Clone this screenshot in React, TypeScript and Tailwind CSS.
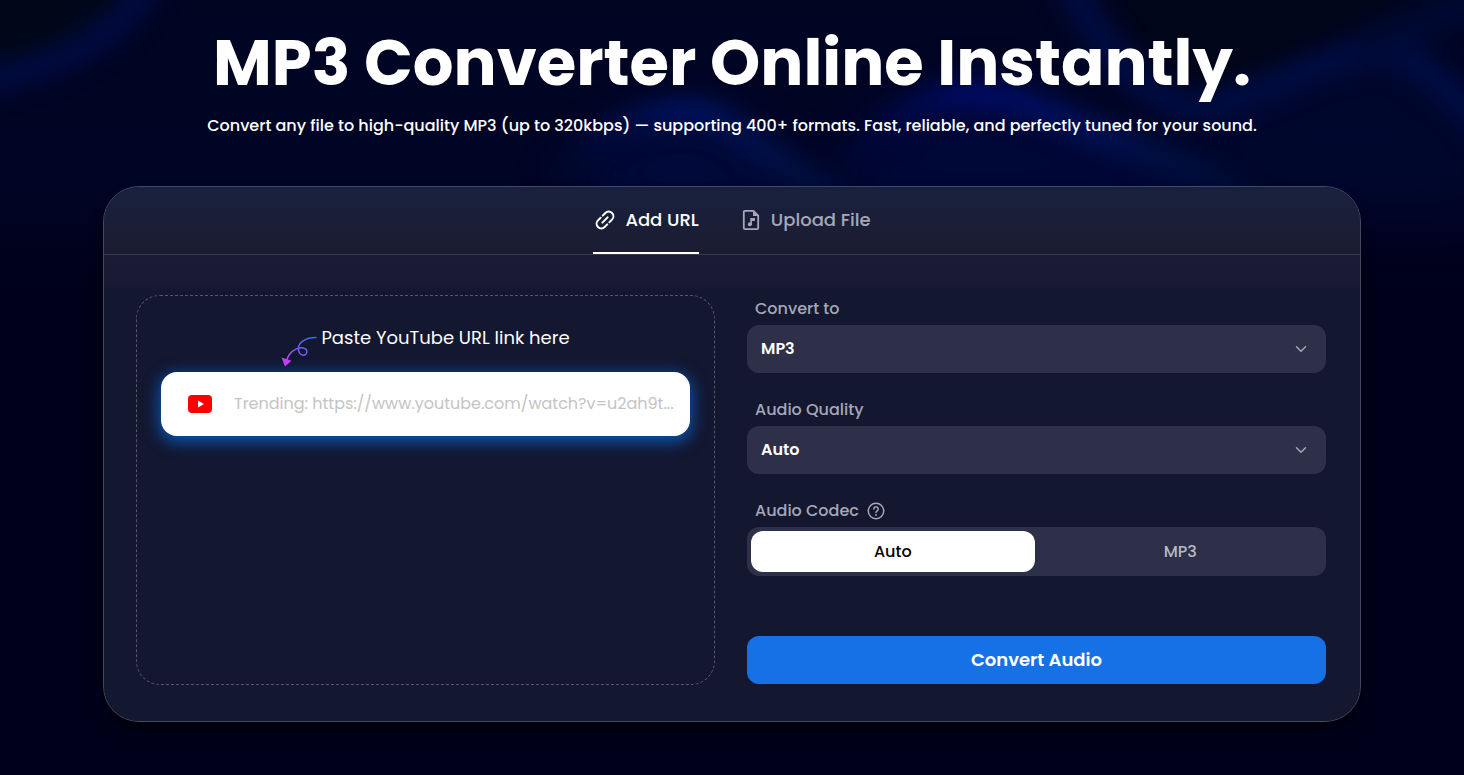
import { useState } from "react";
import { ChevronDown } from "lucide-react";

const TABS = ["url", "file"] as const;
const CODECS = ["Auto", "MP3"];

function LinkIcon() {
  return (
    <svg width="24" height="24" viewBox="0 0 24 24" fill="none" stroke="currentColor" strokeWidth="2" strokeLinecap="round" strokeLinejoin="round" aria-hidden="true">
      <g transform="rotate(-45 12 12)">
        <path d="M10.500 7.300H6.800a4.700 4.700 0 0 0 0 9.400h3.700" />
        <path d="M13.500 16.700h3.700a4.700 4.700 0 0 0 0-9.400h-3.700" />
        <path d="M8.300 12h7.400" />
      </g>
    </svg>
  );
}

function MusicFileIcon() {
  return (
    <svg width="24" height="24" viewBox="0 0 24 24" fill="none" aria-hidden="true">
      <path d="M14.500 2.900H6A1.200 1.200 0 0 0 4.800 4.100v15.800A1.200 1.200 0 0 0 6 21.100h12a1.200 1.200 0 0 0 1.200-1.200V7.600z" stroke="currentColor" strokeWidth="1.800" strokeLinejoin="round" />
      <path d="M14 2.500v5.400h5.500z" fill="currentColor" />
      <path d="M12.100 16.200v-5.500h3v1.600h-2.300" stroke="currentColor" strokeWidth="1.600" />
      <circle cx="10.900" cy="16.200" r="2" fill="currentColor" />
    </svg>
  );
}

function CurlyArrow() {
  return (
    <svg width="36" height="32" viewBox="0 0 36 32" fill="none" aria-hidden="true">
      <defs>
        <linearGradient id="curl" x1="34" y1="2" x2="4" y2="30" gradientUnits="userSpaceOnUse">
          <stop stopColor="#2f6df2" />
          <stop offset="0.55" stopColor="#7c5cf5" />
          <stop offset="1" stopColor="#cf3df5" />
        </linearGradient>
      </defs>
      <path d="M35 1.500C25 1.500 16.500 6.500 17.500 13.500c.8 7 7.800 7.200 8.300 2.500.4-4.500-6-5.500-11-2.800C10 15.700 7 19 5.500 25" stroke="url(#curl)" strokeWidth="1.500" strokeLinecap="round" />
      <path d="M0.500 21.500l10 3.200L4 30.500z" fill="#c63df5" />
    </svg>
  );
}

function YoutubeIcon() {
  return (
    <svg width="24" height="18" viewBox="0 0 24 18" aria-hidden="true">
      <rect width="24" height="18" rx="4" fill="#ff0000" />
      <path d="M10 5.500v7l6-3.500z" fill="#fff" />
    </svg>
  );
}

function HelpIcon() {
  return (
    <svg width="18" height="18" viewBox="0 0 18 18" fill="none" stroke="currentColor" strokeWidth="1.500" strokeLinecap="round" aria-hidden="true">
      <circle cx="9" cy="9" r="7.700" />
      <path d="M6.800 7a2.200 2.200 0 1 1 3.400 1.900C9.400 9.400 9 9.800 9 10.600" />
      <circle cx="9" cy="13" r="0.300" />
    </svg>
  );
}

/* Soft blue ribbons behind the headline */
function Waves() {
  return (
    <svg className="absolute inset-x-0 top-0 w-full h-[290px] pointer-events-none" viewBox="0 0 1464 290" preserveAspectRatio="none" fill="none" aria-hidden="true">
      <defs>
        <filter id="soft" x="-20%" y="-50%" width="140%" height="200%" colorInterpolationFilters="sRGB">
          <feGaussianBlur stdDeviation="12" />
        </filter>
        <filter id="haze" x="-20%" y="-50%" width="140%" height="200%" colorInterpolationFilters="sRGB">
          <feGaussianBlur stdDeviation="26" />
        </filter>
        <linearGradient id="glow" x1="0" y1="0" x2="0" y2="1">
          <stop stopColor="#000522" />
          <stop offset="0.6" stopColor="#000525" />
          <stop offset="1" stopColor="#00001a" />
        </linearGradient>
        <linearGradient id="ribbonLeft" x1="540" y1="0" x2="860" y2="0" gradientUnits="userSpaceOnUse">
          <stop stopColor="#00125a" stopOpacity="0" />
          <stop offset="0.45" stopColor="#00146a" />
          <stop offset="1" stopColor="#001a4a" stopOpacity="0.4" />
        </linearGradient>
        <linearGradient id="ribbonRight" x1="830" y1="0" x2="1270" y2="0" gradientUnits="userSpaceOnUse">
          <stop stopColor="#000c60" stopOpacity="0" />
          <stop offset="0.32" stopColor="#000c74" />
          <stop offset="0.6" stopColor="#00145c" />
          <stop offset="1" stopColor="#00183c" stopOpacity="0.3" />
        </linearGradient>
      </defs>
      <rect width="1464" height="290" fill="url(#glow)" />
      <g filter="url(#haze)">
        <path d="M560 210C630 110 700 110 740 140S820 200 850 210z" fill="#000a3c" />
        <path d="M830 210C900 80 980 80 1060 118S1200 150 1260 210z" fill="#000838" />
        <path d="M1180 210L1220 110L1370 50L1480 120V210z" fill="#00072e" />
      </g>
      <g filter="url(#soft)">
        <path d="M-40-40H145C115 40 60 60-40 75z" fill="#000719" />
        <path d="M1090-40H1480L1350 30Q1220 100 1190 85Q1130 50 1090-40z" fill="#000519" />
        <path d="M160-40C130 40 50 70-40 86" stroke="#000c4c" strokeWidth="22" />
        <path d="M500 220C600 110 690 90 740 132S810 170 860 230" stroke="url(#ribbonLeft)" strokeWidth="24" />
        <path d="M790 220C900 80 970 75 1060 118S1190 150 1280 230" stroke="url(#ribbonRight)" strokeWidth="24" />
        <path d="M1060-40C1100 60 1160 120 1220 104S1330 50 1380 54S1440 90 1510 150" stroke="#000e48" strokeWidth="26" />
        <path d="M1360 50L1500-6" stroke="#000a34" strokeWidth="34" />
      </g>
    </svg>
  );
}

type SelectFieldProps = {
  id: string;
  label: string;
  options: string[];
};

function SelectField({ id, label, options }: SelectFieldProps) {
  return (
    <div>
      <label htmlFor={id} className="block px-2 mb-0.5 text-base leading-7 font-medium text-[#a6a7b8]">
        {label}
      </label>
      <div className="relative">
        <select id={id} className="appearance-none w-full h-12 px-3.5 rounded-xl bg-[#2e2f48] text-base font-semibold text-white outline-none cursor-pointer">
          {options.map((option) => (
            <option key={option}>{option}</option>
          ))}
        </select>
        <ChevronDown size={18} className="absolute right-4 top-1/2 -translate-y-1/2 text-[#a6a7b8] pointer-events-none" />
      </div>
    </div>
  );
}

export default function App() {
  const [tab, setTab] = useState<(typeof TABS)[number]>("url");
  const [codec, setCodec] = useState("Auto");

  const tabClass = (name: string) =>
    `flex items-center gap-2 h-full border-b-2 text-lg font-medium ${
      tab === name ? "border-white text-white" : "border-transparent text-[#a6a7b8]"
    }`;

  return (
    <main className="relative min-h-screen overflow-hidden bg-[#00001a] pt-[27px] pb-12 font-['Poppins',Inter,sans-serif] text-white">
      <Waves />

      <div className="relative px-4 text-center">
        <h1 className="text-[64px] leading-[72px] font-bold">MP3 Converter Online Instantly.</h1>
        <p className="mt-[15px] text-base leading-6 font-medium">
          Convert any file to high-quality MP3 (up to 320kbps) — supporting 400+ formats. Fast, reliable, and perfectly tuned for your sound.
        </p>
      </div>

      <div className="relative mt-12 mx-auto w-full max-w-[1258px] overflow-hidden rounded-[36px] border border-[#454860] bg-[#131730] shadow-lg shadow-black/50">
        {/* Tabs */}
        <div className="flex justify-center gap-10 h-[68px] border-b border-[#363a50] bg-linear-to-b from-[#18213e] to-[#1b1c32]">
          <button type="button" className={tabClass("url")} onClick={() => setTab("url")}>
            <LinkIcon />
            Add URL
          </button>
          <button type="button" className={tabClass("file")} onClick={() => setTab("file")}>
            <MusicFileIcon />
            Upload File
          </button>
        </div>

        <div className="grid md:grid-cols-2 gap-8 pl-8 pr-[34px] pt-10 pb-9 bg-linear-to-b from-[#1c1b36] from-0% via-[#1a1a34] via-5% to-[#131730] to-8%">
          {/* Source */}
          <div className="min-h-[390px] rounded-3xl border border-dashed border-[#53556c] px-6 pt-[30px]">
            <div className="flex items-start justify-center gap-1 h-[46px]">
              <div className="pt-2.5">
                <CurlyArrow />
              </div>
              <label htmlFor="source-url" className="text-lg leading-6">
                Paste YouTube URL link here
              </label>
            </div>
            <div className="flex items-center gap-[22px] h-16 rounded-2xl bg-white pl-[27px] pr-2.5 shadow-[0_4px_16px_2px_#0b55b0]">
              <YoutubeIcon />
              <input
                id="source-url"
                type="url"
                placeholder="Trending: https://www.youtube.com/watch?v=u2ah9t..."
                className="min-w-0 flex-1 bg-transparent text-base text-black placeholder:text-[#c4c4c4] outline-none"
              />
            </div>
          </div>

          {/* Options */}
          <div className="flex flex-col gap-[23px] pb-px">
            <SelectField id="format" label="Convert to" options={["MP3", "WAV", "AAC"]} />
            <SelectField id="quality" label="Audio Quality" options={["Auto", "320 kbps", "192 kbps"]} />

            <fieldset>
              <legend className="flex items-center gap-2 px-2 mb-0.5 text-base leading-7 font-medium text-[#a6a7b8]">
                Audio Codec
                <HelpIcon />
              </legend>
              <div className="grid grid-cols-2 gap-1 h-[49px] p-1 rounded-xl bg-[#2e2f48]">
                {CODECS.map((name) => (
                  <label
                    key={name}
                    className={`flex items-center justify-center rounded-xl text-base font-medium cursor-pointer ${
                      codec === name ? "bg-white text-black" : "text-[#b9bac8]"
                    }`}
                  >
                    <input type="radio" name="codec" value={name} checked={codec === name} onChange={() => setCodec(name)} className="sr-only" />
                    {name}
                  </label>
                ))}
              </div>
            </fieldset>

            <button type="button" className="mt-auto h-12 w-full rounded-xl bg-[#1771e6] text-lg font-semibold">
              Convert Audio
            </button>
          </div>
        </div>
      </div>
    </main>
  );
}
